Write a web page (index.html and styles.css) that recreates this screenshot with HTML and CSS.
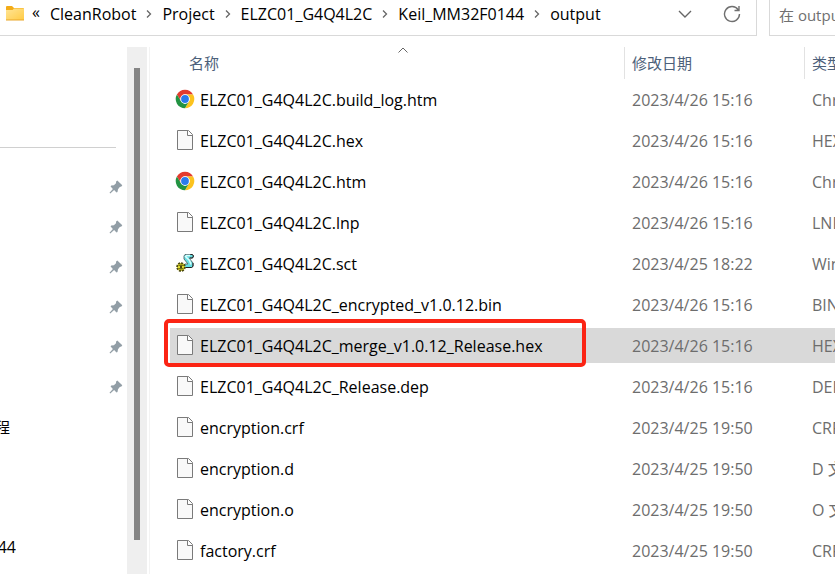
FILE: index.html
```html
<!DOCTYPE html>
<html lang="zh-CN">
<head>
<meta charset="utf-8">
<title>output</title>
<link rel="stylesheet" href="styles.css">
</head>
<body>
<svg class="defs" aria-hidden="true">
  <symbol id="chrome" viewBox="0 0 20 20">
    <circle cx="10" cy="10" r="9.3" fill="#fff"/>
    <path d="M1.9 5.4A9.3 9.3 0 0 1 18.1 5.4L10 5.4A4.6 4.6 0 0 0 6 12.3Z" fill="#e33b2e"/>
    <path d="M18.1 5.4A9.3 9.3 0 0 1 10 19.3L14 12.3A4.6 4.6 0 0 0 10 5.4Z" fill="#fcc31e"/>
    <path d="M10 19.3A9.3 9.3 0 0 1 1.9 5.4L6 12.3A4.6 4.6 0 0 0 14 12.3Z" fill="#229342"/>
    <circle cx="10" cy="10" r="4.7" fill="#fff"/>
    <circle cx="10" cy="10" r="3.9" fill="#2a7bec"/>
  </symbol>
  <symbol id="file" viewBox="0 0 20 20">
    <path d="M2.5.5H13.500L17.500 4.500V19.500H2.500Z" fill="#f9f9f9" stroke="#7a7a7a"/>
    <path d="M12.500.500V5.500H17.500" fill="#fff" stroke="#7a7a7a"/>
  </symbol>
  <symbol id="script" viewBox="0 0 20 20">
    <path d="M10 1.500H17L18.500 3L17.500 5H14L18 10V13L16.500 14.500H10L9 12.500L10 11H13L9 6V3Z" fill="#66dfe3" stroke="#5a7074"/>
    <path d="M10 3L14.500 7.500L16 11.500M11 2.500H15" fill="none" stroke="#d8ffff" stroke-width="1.500"/>
    <path d="M15.500 1.500H17.500L18.500 3L17.500 5H15M18 10V13.500L16.500 14.500H11" fill="none" stroke="#222"/>
    <circle cx="6" cy="14" r="3.900" fill="#e5df2e" stroke="#4d4a10" stroke-width="1.800" stroke-dasharray="2 1"/>
    <path d="M3.500 12.500H8.500M3.500 15.500H8.500M6 10.500V17.500" stroke="#5e5b12" stroke-width=".8"/>
    <circle cx="6" cy="14" r="1.100" fill="#2f2d08"/>
  </symbol>
  <symbol id="pin" viewBox="0 0 14 14">
    <path d="M8.300.500 13.300 5.300 12.400 6.600 10.800 6.900 9 9.200 8.500 11.900 7.500 12.500 5.100 10.100 1.300 13.500 .500 12.700 3.900 8.900 1.600 6.500 2.200 5.500 4.900 5.200 7 3.300 7.100 1.400Z" fill="#929ea6"/>
  </symbol>
  <symbol id="next" viewBox="0 0 8 10">
    <path d="M2 1.500 5.500 5 2 8.500" fill="none" stroke="#666" stroke-width="1.300"/>
  </symbol>
</svg>

<header class="topbar">
  <nav class="address" aria-label="地址">
    <svg class="folder" viewBox="0 0 18 15" aria-hidden="true">
      <defs><linearGradient id="fg" x1="0" y1="0" x2="1" y2="1"><stop offset="0" stop-color="#ffe596"/><stop offset="1" stop-color="#ffcb45"/></linearGradient></defs>
      <path d="M0 1Q0 0 1 0H6L8 2H17Q18 2 18 3V8H0Z" fill="#f3ac18"/>
      <path d="M0 4H6.500L8 2.500H18V14H0Z" fill="url(#fg)"/>
      <path d="M0 13.500H18V14.500H0Z" fill="#e9a62a"/>
    </svg>
    <span class="more">«</span>
    <a href="#">CleanRobot</a><svg class="next"><use href="#next"/></svg>
    <a href="#">Project</a><svg class="next"><use href="#next"/></svg>
    <a href="#">ELZC01_G4Q4L2C</a><svg class="next"><use href="#next"/></svg>
    <a href="#">Keil_MM32F0144</a><svg class="next"><use href="#next"/></svg>
    <a href="#">output</a>
    <button class="tool history" aria-label="历史"><svg viewBox="0 0 18 18"><path d="M3 6 9 12 15 6" fill="none" stroke="#666" stroke-width="1.400"/></svg></button>
    <button class="tool" aria-label="刷新"><svg viewBox="0 0 18 18"><path d="M15.200 4.800A7.500 7.500 0 1 0 16.500 9M16 1V5.500H11.500" fill="none" stroke="#707070" stroke-width="1.400"/></svg></button>
  </nav>
  <input class="search" type="text" placeholder="在 output 中搜索" aria-label="搜索">
</header>

<div class="body">
  <aside class="sidebar">
    <hr>
    <ul>
      <li><svg class="pin"><use href="#pin"/></svg></li>
      <li><svg class="pin"><use href="#pin"/></svg></li>
      <li><svg class="pin"><use href="#pin"/></svg></li>
      <li><svg class="pin"><use href="#pin"/></svg></li>
      <li><svg class="pin"><use href="#pin"/></svg></li>
      <li><svg class="pin"><use href="#pin"/></svg></li>
      <li><span class="cut narrow">程</span></li>
      <li></li>
      <li></li>
      <li><span class="cut">44</span></li>
    </ul>
  </aside>
  <div class="scroll"><div class="thumb"></div></div>
  <main class="files">
    <table>
      <colgroup><col class="c-name"><col class="c-date"><col></colgroup>
      <thead>
        <tr><th class="name">名称<svg class="sort" viewBox="0 0 10 6"><path d="M.5 5.500 5 1 9.500 5.500" fill="none" stroke="#666"/></svg></th><th>修改日期</th><th>类型</th></tr>
      </thead>
      <tbody>
        <tr><td><div class="file"><svg><use href="#chrome"/></svg>ELZC01_G4Q4L2C.build_log.htm</div></td><td>2023/4/26 15:16</td><td>Chrome HTML</td></tr>
        <tr><td><div class="file"><svg><use href="#file"/></svg>ELZC01_G4Q4L2C.hex</div></td><td>2023/4/26 15:16</td><td>HEX 文件</td></tr>
        <tr><td><div class="file"><svg><use href="#chrome"/></svg>ELZC01_G4Q4L2C.htm</div></td><td>2023/4/26 15:16</td><td>Chrome HTML</td></tr>
        <tr><td><div class="file"><svg><use href="#file"/></svg>ELZC01_G4Q4L2C.lnp</div></td><td>2023/4/26 15:16</td><td>LNP 文件</td></tr>
        <tr><td><div class="file"><svg><use href="#script"/></svg>ELZC01_G4Q4L2C.sct</div></td><td>2023/4/25 18:22</td><td>Windows Script</td></tr>
        <tr><td><div class="file"><svg><use href="#file"/></svg>ELZC01_G4Q4L2C_encrypted_v1.0.12.bin</div></td><td>2023/4/26 15:16</td><td>BIN 文件</td></tr>
        <tr class="selected"><td><div class="file"><svg><use href="#file"/></svg>ELZC01_G4Q4L2C_merge_v1.0.12_Release.hex</div><span class="mark"></span></td><td>2023/4/26 15:16</td><td>HEX 文件</td></tr>
        <tr><td><div class="file"><svg><use href="#file"/></svg>ELZC01_G4Q4L2C_Release.dep</div></td><td>2023/4/26 15:16</td><td>DEP 文件</td></tr>
        <tr><td><div class="file"><svg><use href="#file"/></svg>encryption.crf</div></td><td>2023/4/25 19:50</td><td>CRF 文件</td></tr>
        <tr><td><div class="file"><svg><use href="#file"/></svg>encryption.d</div></td><td>2023/4/25 19:50</td><td>D 文件</td></tr>
        <tr><td><div class="file"><svg><use href="#file"/></svg>encryption.o</div></td><td>2023/4/25 19:50</td><td>O 文件</td></tr>
        <tr><td><div class="file"><svg><use href="#file"/></svg>factory.crf</div></td><td>2023/4/25 19:50</td><td>CRF 文件</td></tr>
      </tbody>
    </table>
  </main>
</div>
</body>
</html>
```
FILE: styles.css
```css
* { box-sizing: border-box; }
body {
  margin: 0;
  height: 100vh;
  overflow: hidden;
  display: flex;
  flex-direction: column;
  background: #fff;
  color: #000;
  font: 16px/20px "Open Sans", "Noto Sans CJK SC", sans-serif;
}
.defs { position: absolute; width: 0; height: 0; }
.topbar { display: flex; gap: 12px; height: 36px; flex: none; }
.address {
  flex: 0 0 757px;
  display: flex;
  align-items: center;
  padding: 0 15px 8px 6px;
  border: solid #d9d9d9;
  border-width: 0 1px 1px 0;
}
.address a { color: inherit; text-decoration: none; }
.folder { width: 18px; height: 15px; flex: none; }
.more { width: 26px; padding: 0 0 4px 8px; }
.next { width: 8px; height: 10px; margin: 0 9px; flex: none; }
.tool { width: 18px; height: 18px; padding: 0; border: 0; background: none; }
.tool svg { display: block; width: 18px; height: 18px; }
.history { margin: 0 29px 0 auto; }
.search {
  flex: 1;
  min-width: 0;
  padding: 0 0 6px 9px;
  border: solid #d9d9d9;
  border-width: 0 0 1px 1px;
  border-radius: 0;
  outline: 0;
  font: inherit;
  font-size: 15px;
}
.search::placeholder { color: #707070; opacity: 1; }
.body { flex: 1; min-height: 0; display: flex; padding-top: 11px; }
.sidebar { flex: 0 0 127px; }
.sidebar hr { margin: 100px 11px 19px 0; border: 0; border-top: 1px solid #d0d0d0; }
.sidebar ul { margin: 0; padding: 0 4px 0 0; list-style: none; }
.sidebar li { height: 40px; display: flex; align-items: center; }
.pin { width: 14px; height: 14px; margin-left: auto; }
.cut { width: 16px; display: flex; justify-content: flex-end; overflow: hidden; }
.narrow { width: 10px; font-size: 15px; }
.scroll { flex: 0 0 20px; padding: 21px 7px 34px; background: #efefef; }
.thumb { height: 100%; background: #858585; }
.files {
  flex: 1;
  min-width: 0;
  margin-left: 2px;
  padding-left: 20px;
  border-left: 1px solid #f3f3f3;
  overflow: hidden;
}
table { width: 100%; table-layout: fixed; border-collapse: separate; border-spacing: 0; }
.c-name { width: 454px; }
.c-date { width: 180px; }
th {
  position: relative;
  height: 32px;
  padding: 0 0 0 7px;
  border-left: 1px solid #e2e2e2;
  color: #4c607a;
  font-size: 15px;
  font-weight: 400;
  text-align: left;
  white-space: nowrap;
  overflow: hidden;
}
th.name { padding-left: 19px; border-left: 0; }
.sort { position: absolute; left: 228px; top: 0; width: 10px; height: 6px; }
td {
  height: 41px;
  padding: 0 0 0 8px;
  border: solid transparent;
  border-width: 3px 0;
  background-clip: padding-box;
  color: #6d6d6d;
  white-space: nowrap;
  overflow: hidden;
}
td:first-child { position: relative; padding-left: 5px; color: #000; overflow: visible; }
.selected td { background-color: #d9d9d9; }
.file { display: flex; align-items: center; gap: 5px; }
.file svg { width: 20px; height: 20px; margin-bottom: 2px; flex: none; }
.mark {
  position: absolute;
  inset: -9px 38px -4px -6px;
  border: 4px solid #fb2414;
  border-radius: 5px;
}
```
